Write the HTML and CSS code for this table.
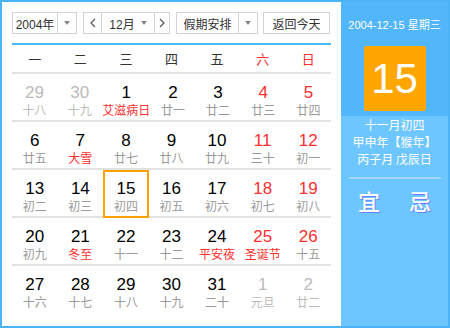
FILE: index.html
```html
<!DOCTYPE html>
<html>
<head>
<meta charset="utf-8">
<link rel="stylesheet" href="styles.css">
</head>
<body>
<div class="cal">
  <div class="main">
    <div class="toolbar">
      <div class="sel year"><span class="val">2004年</span><span class="drop"><i class="tri"></i></span></div>
      <div class="sel month">
        <span class="nav"><svg width="8" height="10" viewBox="0 0 8 10"><polyline points="6,1 2,5 6,9" fill="none" stroke="#555" stroke-width="1.2"/></svg></span>
        <span class="val mval">12月<i class="tri"></i></span>
        <span class="nav"><svg width="8" height="10" viewBox="0 0 8 10"><polyline points="2,1 6,5 2,9" fill="none" stroke="#555" stroke-width="1.2"/></svg></span>
      </div>
      <div class="sel holiday"><span class="val">假期安排</span><span class="drop"><i class="tri"></i></span></div>
      <div class="btn">返回今天</div>
    </div>
    <div class="grid">
      <div class="week">
        <span>一</span><span>二</span><span>三</span><span>四</span><span>五</span><span class="red">六</span><span class="red">日</span>
      </div>
      <div class="row">
        <div class="cell other"><b>29</b><em>十八</em></div>
        <div class="cell other"><b>30</b><em>十九</em></div>
        <div class="cell"><b>1</b><em class="red">艾滋病日</em></div>
        <div class="cell"><b>2</b><em>廿一</em></div>
        <div class="cell"><b>3</b><em>廿二</em></div>
        <div class="cell wk"><b>4</b><em>廿三</em></div>
        <div class="cell wk"><b>5</b><em>廿四</em></div>
      </div>
      <div class="row">
        <div class="cell"><b>6</b><em>廿五</em></div>
        <div class="cell"><b>7</b><em class="red">大雪</em></div>
        <div class="cell"><b>8</b><em>廿七</em></div>
        <div class="cell"><b>9</b><em>廿八</em></div>
        <div class="cell"><b>10</b><em>廿九</em></div>
        <div class="cell wk"><b>11</b><em>三十</em></div>
        <div class="cell wk"><b>12</b><em>初一</em></div>
      </div>
      <div class="row">
        <div class="cell"><b>13</b><em>初二</em></div>
        <div class="cell"><b>14</b><em>初三</em></div>
        <div class="cell today"><b>15</b><em>初四</em></div>
        <div class="cell"><b>16</b><em>初五</em></div>
        <div class="cell"><b>17</b><em>初六</em></div>
        <div class="cell wk"><b>18</b><em>初七</em></div>
        <div class="cell wk"><b>19</b><em>初八</em></div>
      </div>
      <div class="row">
        <div class="cell"><b>20</b><em>初九</em></div>
        <div class="cell"><b>21</b><em class="red">冬至</em></div>
        <div class="cell"><b>22</b><em>十一</em></div>
        <div class="cell"><b>23</b><em>十二</em></div>
        <div class="cell"><b>24</b><em class="red">平安夜</em></div>
        <div class="cell wk"><b>25</b><em class="red">圣诞节</em></div>
        <div class="cell wk"><b>26</b><em>十五</em></div>
      </div>
      <div class="row last">
        <div class="cell"><b>27</b><em>十六</em></div>
        <div class="cell"><b>28</b><em>十七</em></div>
        <div class="cell"><b>29</b><em>十八</em></div>
        <div class="cell"><b>30</b><em>十九</em></div>
        <div class="cell"><b>31</b><em>二十</em></div>
        <div class="cell other"><b>1</b><em>元旦</em></div>
        <div class="cell other"><b>2</b><em>廿二</em></div>
      </div>
    </div>
  </div>
  <div class="side">
    <div class="side-top">
      <div class="date">2004-12-15 星期三</div>
      <div class="bigday">15</div>
    </div>
    <div class="side-bottom">
      <div class="lunar">十一月初四</div>
      <div class="lunar">甲申年【猴年】</div>
      <div class="lunar">丙子月 戊辰日</div>
      <div class="divider"></div>
      <div class="yiji"><span>宜</span><span>忌</span></div>
    </div>
  </div>
</div>
</body>
</html>
```

FILE: styles.css
```css
* { box-sizing: border-box; }
body {
  margin: 0;
  background: #fff;
  font-family: "Liberation Sans", Arial, "Noto Sans CJK SC", sans-serif;
}
.cal {
  width: 450px;
  height: 328px;
  border: 2px solid #4cb3f6;
  display: flex;
  background: #fff;
}
.main {
  width: 319px;
  margin-left: 10px;
  padding-top: 10px;
}
.toolbar {
  display: flex;
  height: 22px;
  font-size: 12px;
  color: #333;
}
.sel, .btn {
  border: 1px solid #d4d4d4;
  display: flex;
  align-items: stretch;
  background: #fff;
}
.year { width: 65px; }
.month { width: 87px; margin-left: 6px; }
.holiday { width: 82px; margin-left: 6px; }
.btn { width: 67px; margin-left: 5px; justify-content: center; align-items: center; }
.val {
  flex: 1;
  display: flex;
  align-items: center;
  justify-content: center;
}
.drop {
  width: 19px;
  border-left: 1px solid #d4d4d4;
  display: flex;
  align-items: center;
  justify-content: center;
}
.tri {
  display: inline-block;
  width: 0;
  height: 0;
  border-left: 3.5px solid transparent;
  border-right: 3.5px solid transparent;
  border-top: 4px solid #888;
}
.mval .tri { margin-left: 6px; }
.nav {
  width: 18px;
  display: flex;
  align-items: center;
  justify-content: center;
}
.nav:first-child { border-right: 1px solid #d4d4d4; }
.nav:last-child { border-left: 1px solid #d4d4d4; width: 15px; }
.grid {
  margin-top: 9px;
  border-top: 2px solid #4cb8fb;
}
.week {
  display: grid;
  grid-template-columns: repeat(7, 1fr);
  height: 29px;
  border-bottom: 2px solid #e2e2e2;
  font-family: "Noto Sans CJK SC", sans-serif;
  font-size: 13px;
  color: #333;
  align-items: center;
  text-align: center;
}
.red { color: #ff2f2f; }
.row {
  display: grid;
  grid-template-columns: repeat(7, 1fr);
  height: 48px;
  border-bottom: 2px solid #e2e2e2;
}
.row.last { border-bottom: none; }
.cell {
  display: flex;
  flex-direction: column;
  align-items: center;
  padding-top: 9px;
  white-space: nowrap;
}
.cell b {
  font-weight: normal;
  font-size: 17px;
  line-height: 19px;
  color: #000;
}
.cell em {
  font-style: normal;
  font-family: "Noto Sans CJK SC", sans-serif;
  font-size: 12px;
  line-height: 16px;
  color: #9a9a9a;
}
.cell em.red { color: #ff2f2f; }
.cell.wk b { color: #ff2f2f; }
.cell.other b { color: #bbbbbb; }
.cell.other em { color: #bbbbbb; }
.cell.today {
  border: 2px solid #ffa200;
  padding-top: 7px;
  height: 48px;
}
.side {
  margin-left: 10px;
  width: 107px;
  display: flex;
  flex-direction: column;
  color: #fff;
}
.side-top {
  background: #52b6fa;
  height: 114px;
  display: flex;
  flex-direction: column;
  align-items: center;
  padding-top: 15px;
}
.date {
  font-size: 11px;
  line-height: 16px;
  white-space: nowrap;
  font-family: "Liberation Sans", "Noto Sans CJK SC", sans-serif;
}
.bigday {
  margin-top: 13px;
  width: 62px;
  height: 65px;
  background: #ffa600;
  border-radius: 2px;
  display: flex;
  align-items: center;
  justify-content: center;
  font-size: 42px;
  color: #fff;
}
.side-bottom {
  flex: 1;
  background: #6dc6ff;
  display: flex;
  flex-direction: column;
  align-items: center;
  padding-top: 0;
}
.lunar {
  font-family: "Noto Sans CJK SC", sans-serif;
  font-size: 12px;
  line-height: 17px;
}
.divider {
  margin-top: 10px;
  width: 92px;
  height: 2px;
  background: rgba(255, 255, 255, 0.35);
}
.yiji {
  margin-top: 8px;
  display: flex;
  gap: 29px;
  font-family: "Noto Sans CJK SC", sans-serif;
  font-size: 22px;
  line-height: 26px;
  font-weight: 500;
  color: #fff;
  text-shadow: 1px 1px 0 #6f7cff;
}
```
